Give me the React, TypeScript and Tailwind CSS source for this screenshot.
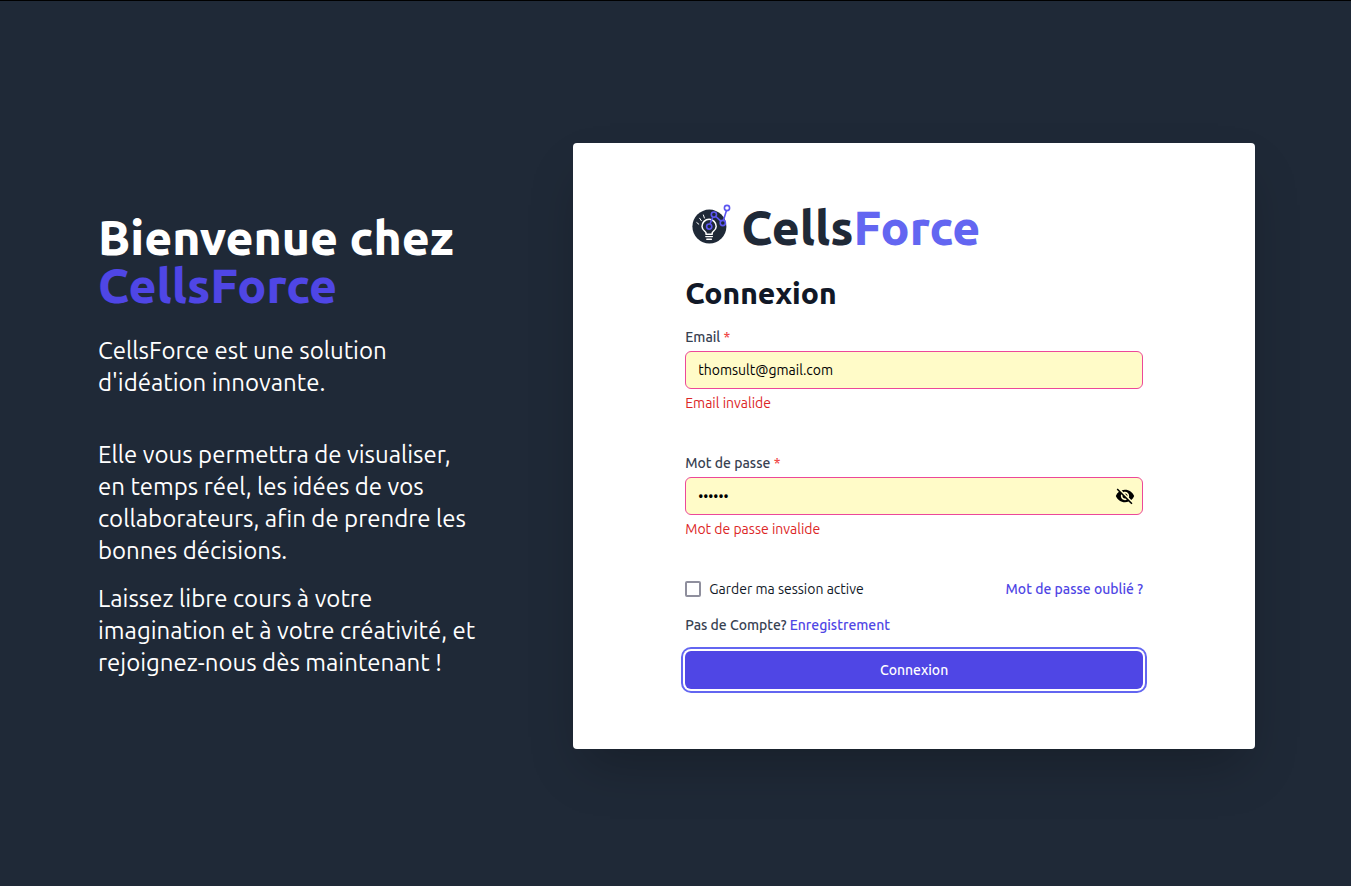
import { useState } from "react";
import { MdVisibilityOff } from "react-icons/md";

function LogoMark() {
  return (
    <svg viewBox="0 0 40 48" className="h-12 w-10 shrink-0" fill="none" aria-hidden="true">
      <circle cx="17.4" cy="23.6" r="17" fill="#1f2937" />
      <path d="M6.8 21.2 4.8 19.6M9.4 17.8 7.6 15.2M12.4 15 11.4 12" stroke="#fff" strokeWidth="1" strokeLinecap="round" />
      <path
        d="M14 31.2v-1.4c0-1.3-4-2.6-4-6.4a7.1 7.1 0 0 1 14.2 0c0 3.8-4 5.1-4 6.4v1.4Z"
        stroke="#fff"
        strokeWidth="1.5"
        strokeLinejoin="round"
      />
      <path d="M13.8 33.6h6.6M14.8 36.2h4.6" stroke="#fff" strokeWidth="1.4" strokeLinecap="round" />
      <g stroke="#5b55f0" strokeWidth="1.6">
        <path d="M18 21 20.8 14.2M23.9 13.6 28.9 18.2M31.4 17.4 34.4 7.8" />
        <circle cx="17.2" cy="23.6" r="2.6" />
        <circle cx="21.9" cy="11.6" r="2.6" />
        <circle cx="30.8" cy="20" r="2.6" />
        <circle cx="35" cy="5" r="2.6" />
      </g>
    </svg>
  );
}

const fieldClass =
  "block h-[38px] w-full rounded-md border border-[#ec4899] bg-[#fffbc8] pl-3 text-sm text-black outline-none";

function FieldLabel({ htmlFor, text }: { htmlFor: string; text: string }) {
  return (
    <label htmlFor={htmlFor} className="block text-sm font-medium text-[#374151]">
      {text} <span className="text-[#ef4444]">*</span>
    </label>
  );
}

export default function App() {
  const [email, setEmail] = useState("thomsult@gmail.com");
  const [password, setPassword] = useState("secret");
  const [visible, setVisible] = useState(false);

  return (
    <main className="grid min-h-screen grid-cols-[7fr_10fr] items-center border-t border-black bg-[#1f2937] px-24 pt-[5px] font-['Ubuntu','Noto_Sans',sans-serif]">
      <section className="pl-0.5 text-2xl text-white">
        <h1 className="text-5xl leading-[48px] font-extrabold whitespace-nowrap">
          Bienvenue chez
          <br />
          <span className="text-[#4f46e5]">CellsForce</span>
        </h1>
        <p className="mt-[26px]">
          CellsForce est une solution
          <br />
          d'idéation innovante.
        </p>
        <p className="mt-10">
          Elle vous permettra de visualiser,
          <br />
          en temps réel, les idées de vos
          <br />
          collaborateurs, afin de prendre les
          <br />
          bonnes décisions.
        </p>
        <p className="mt-4">
          Laissez libre cours à votre
          <br />
          imagination et à votre créativité, et
          <br />
          rejoignez-nous dès maintenant !
        </p>
      </section>

      <section className="rounded bg-white px-28 py-15 shadow-2xl">
        <div className="flex h-12 items-center gap-[9px] pl-[7px]">
          <LogoMark />
          <span className="text-5xl leading-[48px] font-extrabold text-[#1f2937]">
            Cells<span className="text-[#6366f1]">Force</span>
          </span>
        </div>
        <h2 className="mt-6 text-3xl leading-9 font-extrabold text-[#111827]">Connexion</h2>

        <form className="mt-4" noValidate onSubmit={(e) => e.preventDefault()}>
          <FieldLabel htmlFor="email" text="Email" />
          <input
            id="email"
            type="email"
            value={email}
            onChange={(e) => setEmail(e.target.value)}
            className={`${fieldClass} mt-1 pr-3`}
          />
          <p className="mt-1 text-sm text-[#dc2626]">Email invalide</p>

          <div className="mt-10">
            <FieldLabel htmlFor="password" text="Mot de passe" />
          </div>
          <div className="relative mt-1">
            <input
              id="password"
              type={visible ? "text" : "password"}
              value={password}
              onChange={(e) => setPassword(e.target.value)}
              className={`${fieldClass} pr-10`}
            />
            <button
              type="button"
              aria-label="Afficher le mot de passe"
              onClick={() => setVisible(!visible)}
              className="absolute inset-y-0 right-2 flex items-center text-black"
            >
              <MdVisibilityOff className="size-5" />
            </button>
          </div>
          <p className="mt-1 text-sm text-[#dc2626]">Mot de passe invalide</p>

          <div className="mt-10 flex items-center justify-between text-sm">
            <label htmlFor="remember" className="flex items-center gap-2 text-[#111827]">
              <input
                id="remember"
                type="checkbox"
                className="size-4 appearance-none rounded-xs border-2 border-[#8f8f9d] bg-white checked:bg-[#4f46e5]"
              />
              Garder ma session active
            </label>
            <a href="#oubli" className="font-medium text-[#4f46e5]">
              Mot de passe oublié ?
            </a>
          </div>
          <p className="mt-4 text-sm font-medium text-[#374151]">
            Pas de Compte?{" "}
            <a href="#enregistrement" className="text-[#4f46e5]">
              Enregistrement
            </a>
          </p>
          <button
            type="submit"
            className="mt-4 block h-[38px] w-full rounded-md bg-[#4f46e5] text-sm font-medium text-white ring-2 ring-[#6366f1] ring-offset-2"
          >
            Connexion
          </button>
        </form>
      </section>
    </main>
  );
}
